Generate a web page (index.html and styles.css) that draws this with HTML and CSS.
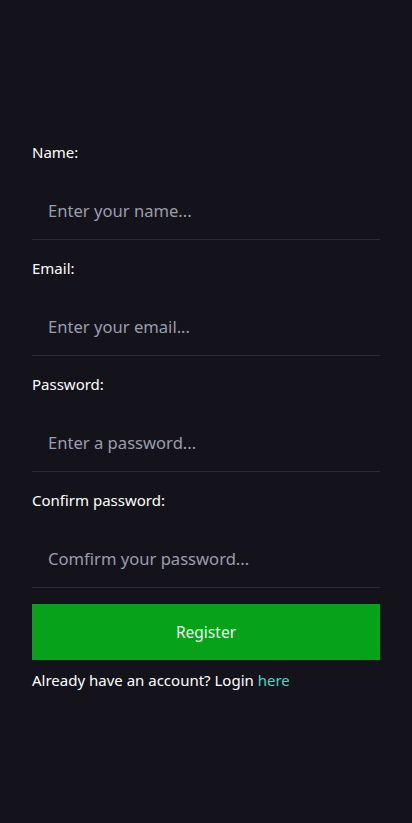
FILE: index.html
```html
<!DOCTYPE html>
<html lang="en">
<head>
<meta charset="utf-8">
<meta name="viewport" content="width=device-width, initial-scale=1">
<title>Register</title>
<link rel="stylesheet" href="styles.css">
</head>
<body>
<main class="page">
  <form class="form">
    <div class="field">
      <label class="label" for="name">Name:</label>
      <input class="input" id="name" type="text" placeholder="Enter your name...">
    </div>
    <div class="field">
      <label class="label" for="email">Email:</label>
      <input class="input" id="email" type="email" placeholder="Enter your email...">
    </div>
    <div class="field">
      <label class="label" for="password">Password:</label>
      <input class="input" id="password" type="password" placeholder="Enter a password...">
    </div>
    <div class="field">
      <label class="label" for="confirm">Confirm password:</label>
      <input class="input" id="confirm" type="password" placeholder="Comfirm your password...">
    </div>
    <button class="button" type="button">Register</button>
    <p class="note">Already have an account? Login <a class="link" href="#">here</a></p>
  </form>
</main>
</body>
</html>
```
FILE: styles.css
```css
html, body {
  margin: 0;
  padding: 0;
  background: #14131c;
}
body {
  font-family: "Noto Sans", "Open Sans", sans-serif;
  color: #ffffff;
  min-height: 823px;
}
.page {
  padding: 142px 32px 0;
}
.form {
  display: flex;
  flex-direction: column;
}
.field {
  display: flex;
  flex-direction: column;
  padding-bottom: 18px;
}
.label {
  font-size: 15px;
  line-height: 20px;
  height: 20px;
  margin-bottom: 20px;
}
.input {
  box-sizing: border-box;
  height: 58px;
  padding: 0 16px;
  margin: 0;
  border: 0;
  border-bottom: 1px solid #2a2935;
  background: transparent;
  color: #ffffff;
  font-family: inherit;
  font-size: 16.6px;
  outline: none;
}
.input::placeholder {
  color: #9a9dab;
}
.button {
  height: 56px;
  margin-top: -2px;
  border: 0;
  background: #05a21a;
  color: #eef8ee;
  font-family: inherit;
  font-size: 15.5px;
}
.note {
  margin: 10px 0 0;
  font-size: 15px;
  line-height: 20px;
}
.link {
  color: #3fd9c2;
  text-decoration: none;
}
```
